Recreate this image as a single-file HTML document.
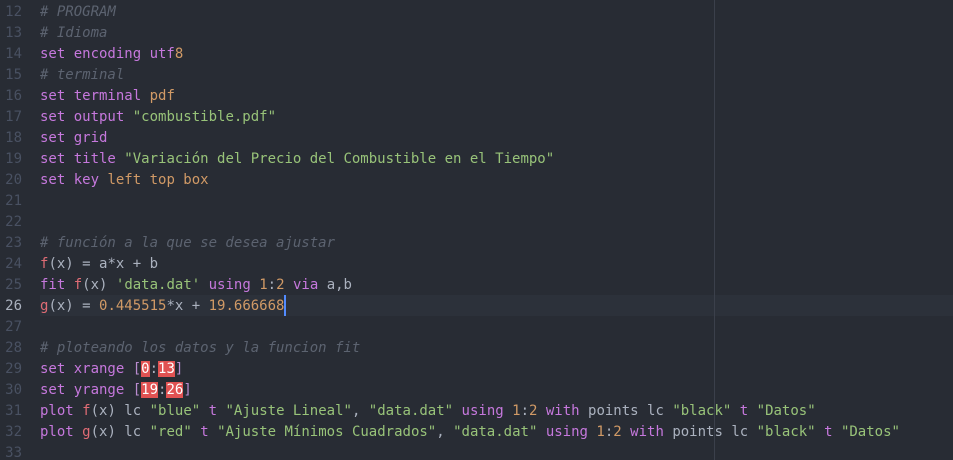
<!DOCTYPE html>
<html><head><meta charset="utf-8"><style>
html,body{margin:0;padding:0;background:#282c34;width:953px;height:460px;overflow:hidden}
.ed{position:relative;width:953px;height:460px;font-family:"DejaVu Sans Mono","Liberation Mono",monospace;font-size:14px;color:#abb2bf}
.ln{position:absolute;left:0;width:953px;height:21px;line-height:21px;white-space:pre}
.n{position:absolute;left:-9px;width:31px;text-align:right;color:#495162;}
.c{position:absolute;left:40px}
.cur{background:#2c313a;left:40px;width:913px}
.k{color:#c678dd}.o{color:#d19a66}.s{color:#98c379}.f{color:#e06c75}.m{color:#5c6370;font-style:italic}
.b{color:#b98ccf}.r{background:#e05252;color:#fff}
.guide{position:absolute;left:714px;top:0;width:1px;height:460px;background:#3b404b}
.caret{position:absolute;left:284px;top:295px;width:2px;height:21px;background:#528bff}
</style></head><body><div class="ed">
<div class="ln cur" style="top:295px;left:40px"></div>
<div class="guide"></div>
<div class="ln" style="top:1.5px"><span class="n">12</span><span class="c"><span class="m"># PROGRAM</span></span></div>
<div class="ln" style="top:22.5px"><span class="n">13</span><span class="c"><span class="m"># Idioma</span></span></div>
<div class="ln" style="top:43.5px"><span class="n">14</span><span class="c"><span class="k">set encoding utf</span><span class="o">8</span></span></div>
<div class="ln" style="top:64.5px"><span class="n">15</span><span class="c"><span class="m"># terminal</span></span></div>
<div class="ln" style="top:85.5px"><span class="n">16</span><span class="c"><span class="k">set terminal</span> <span class="o">pdf</span></span></div>
<div class="ln" style="top:106.5px"><span class="n">17</span><span class="c"><span class="k">set output</span> <span class="s">"combustible.pdf"</span></span></div>
<div class="ln" style="top:127.5px"><span class="n">18</span><span class="c"><span class="k">set grid</span></span></div>
<div class="ln" style="top:148.5px"><span class="n">19</span><span class="c"><span class="k">set title</span> <span class="s">"Variación del Precio del Combustible en el Tiempo"</span></span></div>
<div class="ln" style="top:169.5px"><span class="n">20</span><span class="c"><span class="k">set key</span> <span class="o">left top box</span></span></div>
<div class="ln" style="top:190.5px"><span class="n">21</span></div>
<div class="ln" style="top:211.5px"><span class="n">22</span></div>
<div class="ln" style="top:232.5px"><span class="n">23</span><span class="c"><span class="m"># función a la que se desea ajustar</span></span></div>
<div class="ln" style="top:253.5px"><span class="n">24</span><span class="c"><span class="f">f</span>(x) = a*x + b</span></div>
<div class="ln" style="top:274.5px"><span class="n">25</span><span class="c"><span class="k">fit</span> <span class="f">f</span>(x) <span class="s">'data.dat'</span> <span class="k">using</span> <span class="o">1</span>:<span class="o">2</span> <span class="k">via</span> a,b</span></div>
<div class="ln" style="top:295.5px"><span class="n" style="color:#abb2bf">26</span><span class="c"><span class="f">g</span>(x) = <span class="o">0.445515</span>*x + <span class="o">19.666668</span></span></div>
<div class="ln" style="top:316.5px"><span class="n">27</span></div>
<div class="ln" style="top:337.5px"><span class="n">28</span><span class="c"><span class="m"># ploteando los datos y la funcion fit</span></span></div>
<div class="ln" style="top:358.5px"><span class="n">29</span><span class="c"><span class="k">set xrange</span> <span class="b">[</span><span class="r">0</span>:<span class="r">13</span><span class="b">]</span></span></div>
<div class="ln" style="top:379.5px"><span class="n">30</span><span class="c"><span class="k">set yrange</span> <span class="b">[</span><span class="r">19</span>:<span class="r">26</span><span class="b">]</span></span></div>
<div class="ln" style="top:400.5px"><span class="n">31</span><span class="c"><span class="k">plot</span> <span class="f">f</span>(x) lc <span class="s">"blue"</span> <span class="k">t</span> <span class="s">"Ajuste Lineal"</span>, <span class="s">"data.dat"</span> <span class="k">using</span> <span class="o">1</span>:<span class="o">2</span> <span class="k">with</span> points lc <span class="s">"black"</span> <span class="k">t</span> <span class="s">"Datos"</span></span></div>
<div class="ln" style="top:421.5px"><span class="n">32</span><span class="c"><span class="k">plot</span> <span class="f">g</span>(x) lc <span class="s">"red"</span> <span class="k">t</span> <span class="s">"Ajuste Mínimos Cuadrados"</span>, <span class="s">"data.dat"</span> <span class="k">using</span> <span class="o">1</span>:<span class="o">2</span> <span class="k">with</span> points lc <span class="s">"black"</span> <span class="k">t</span> <span class="s">"Datos"</span></span></div>
<div class="ln" style="top:442.5px"><span class="n">33</span></div>
<div class="caret"></div>
</div></body></html>
